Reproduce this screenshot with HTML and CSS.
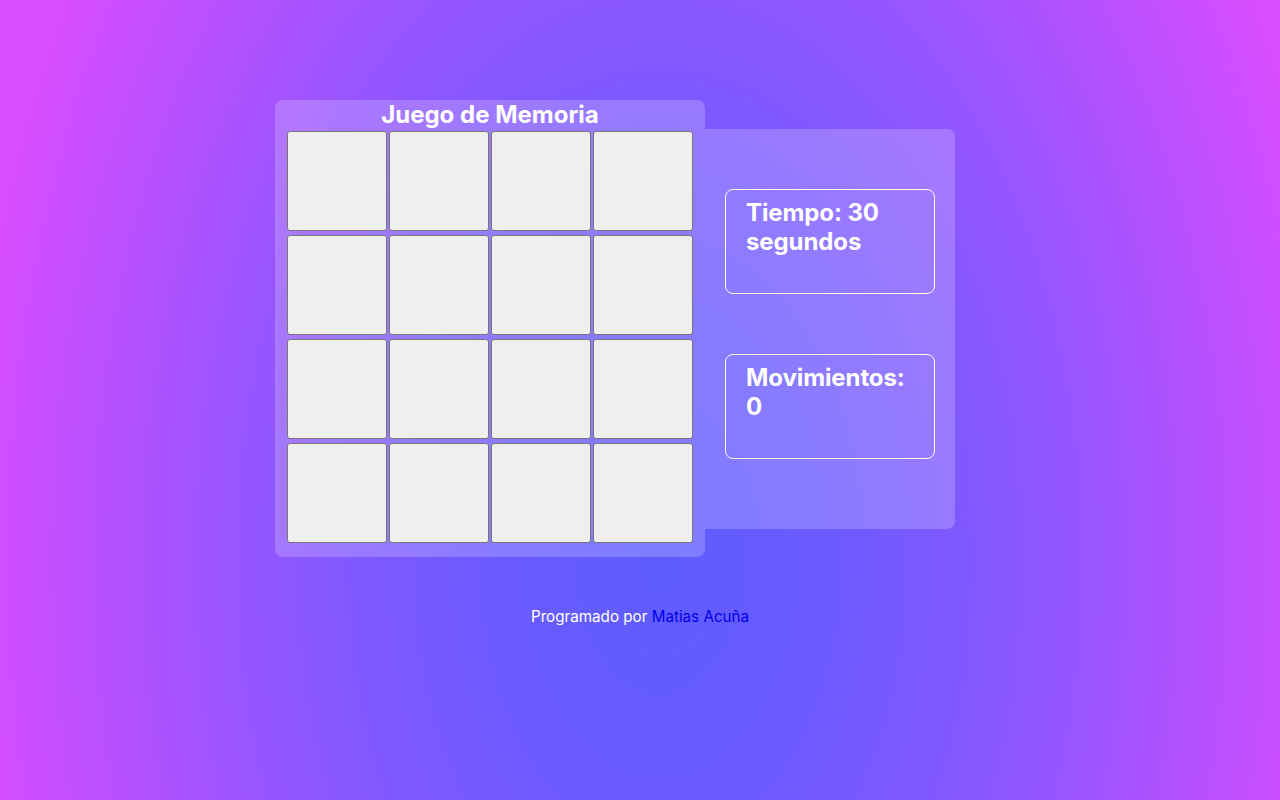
FILE: index.html
```html
<!DOCTYPE html>
<html lang="es">
<head>
<meta charset="utf-8">
<title>Juego de Memoria</title>
<link rel="stylesheet" href="styles.css">
</head>
<body>
<main class="layout">
  <section class="board-panel">
    <h1 class="title">Juego de Memoria</h1>
    <div class="grid">
      <button class="card"></button><button class="card"></button><button class="card"></button><button class="card"></button>
      <button class="card"></button><button class="card"></button><button class="card"></button><button class="card"></button>
      <button class="card"></button><button class="card"></button><button class="card"></button><button class="card"></button>
      <button class="card"></button><button class="card"></button><button class="card"></button><button class="card"></button>
    </div>
  </section>
  <aside class="stats-panel">
    <div class="stat"><h2 class="stat-text">Tiempo: 30 segundos</h2></div>
    <div class="stat"><h2 class="stat-text">Movimientos: 0</h2></div>
  </aside>
</main>
<footer class="footer">Programado por <a class="author" href="#">Matias Acuña</a></footer>
</body>
</html>
```

FILE: styles.css
```css
html, body {
  margin: 0;
  padding: 0;
}

body {
  min-height: 100vh;
  box-sizing: border-box;
  padding-top: 100px;
  font-family: Inter, "Noto Sans", sans-serif;
  color: #ffffff;
  background: radial-gradient(ellipse 700px 1100px at 660px 560px,
    #5e5cff 0%, #6a5bff 22%, #7e59ff 42%, #9656ff 60%, #b451ff 78%, #d94dff 100%);
  background-color: #d94dff;
}

.layout {
  width: 730px;
  margin: 0 auto;
  display: flex;
  align-items: center;
}

.board-panel {
  width: 430px;
  box-sizing: border-box;
  padding: 0 12px 14px;
  background: rgba(255, 255, 255, 0.2);
  border-radius: 8px;
}

.title {
  margin: 0 0 2px;
  font-size: 24px;
  font-weight: 700;
  line-height: 29px;
  text-align: center;
}

.grid {
  display: grid;
  grid-template-columns: repeat(4, 100px);
  column-gap: 2px;
  row-gap: 4px;
}

.card {
  width: 100px;
  height: 100px;
  box-sizing: border-box;
  margin: 0;
  padding: 0;
  background: #efefef;
  border: 1px solid #767676;
  border-radius: 3px;
}

.stats-panel {
  width: 250px;
  height: 400px;
  box-sizing: border-box;
  padding: 60px 20px 0;
  display: flex;
  flex-direction: column;
  gap: 60px;
  background: rgba(255, 255, 255, 0.2);
  border-radius: 0 8px 8px 0;
}

.stat {
  height: 105px;
  box-sizing: border-box;
  padding: 8px 20px 0 20px;
  border: 1px solid #ffffff;
  border-radius: 8px;
}

.stat-text {
  margin: 0;
  font-size: 24px;
  font-weight: 700;
  line-height: 29px;
  letter-spacing: -0.1px;
}

.footer {
  margin-top: 50px;
  text-align: center;
  font-size: 15.2px;
  line-height: 19px;
}

.author {
  color: #0000ee;
  text-decoration: none;
}
```
